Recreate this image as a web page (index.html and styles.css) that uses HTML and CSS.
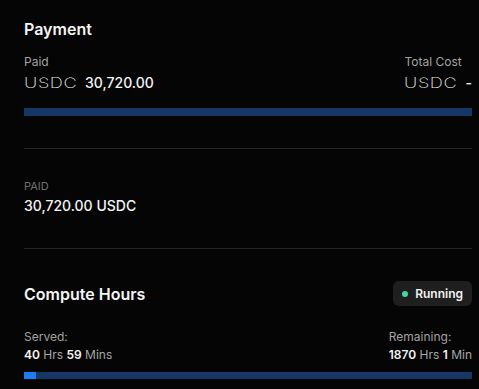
FILE: index.html
```html
<!DOCTYPE html>
<html lang="en">
<head>
    <meta charset="UTF-8">
    <meta name="viewport" content="width=device-width, initial-scale=1.0">
    <title>Payment</title>
    <link rel="stylesheet" href="styles.css">
</head>
<body>
  <div class="panel">
    <div class="section">
      <h2>Payment</h2>
      <div class="split">
        <div class="stat">
          <p class="label">Paid</p>
          <div class="amount"><span class="coin">USDC</span><span class="num">30,720.00</span></div>
        </div>
        <div class="stat">
          <p class="label">Total Cost</p>
          <div class="amount"><span class="coin">USDC</span><span class="num">-</span></div>
        </div>
      </div>
      <div class="bar"><div class="fill" style="width: 0%"></div></div>
    </div>

    <div class="line"></div>

    <div class="section paid">
      <p class="caps">PAID</p>
      <p class="total">30,720.00 USDC</p>
    </div>

    <div class="line"></div>

    <div class="section">
      <div class="head">
        <h2>Compute Hours</h2>
        <div class="badge"><span class="dot"></span>Running</div>
      </div>
      <div class="split hours">
        <div class="stat">
          <p class="label">Served:</p>
          <p class="time"><b>40</b> Hrs <b>59</b> Mins</p>
        </div>
        <div class="stat">
          <p class="label">Remaining:</p>
          <p class="time"><b>1870</b> Hrs <b>1</b> Min</p>
        </div>
      </div>
      <div class="bar thin"><div class="fill" style="width: 2.7%"></div></div>
    </div>
  </div>
</body>
</html>
```

FILE: styles.css
```css
*{
    margin: 0;
    padding: 0;
    box-sizing: border-box;
    font-family: Inter, "Noto Sans", sans-serif;
}
body{
    background-color: #050505;
    color: #f2f2f2;
}
.panel{
    padding: 19px 7px 0 24px;
}
h2{
    font-size: 16px;
    line-height: 20px;
    font-weight: 600;
    color: #f4f4f4;
}
.split{
    display: flex;
    justify-content: space-between;
    margin-top: 15px;
}
.label{
    font-size: 12px;
    line-height: 16px;
    color: #a3a3a3;
}
.amount{
    display: flex;
    align-items: center;
    margin-top: 2px;
    height: 20px;
}
.coin{
    display: inline-block;
    font-size: 14px;
    font-weight: 200;
    letter-spacing: 0.5px;
    color: #e8e8e8;
    transform: scaleX(1.3);
    transform-origin: left center;
    margin-right: 20px;
}
.num{
    font-size: 14px;
    font-weight: 500;
    color: #f4f4f4;
}
.bar{
    height: 8px;
    margin-top: 16px;
    background-color: #163765;
}
.bar.thin{
    height: 7px;
    margin-top: 9px;
}
.fill{
    height: 100%;
    background-color: #1b7cf3;
}
.line{
    height: 1px;
    margin-top: 32px;
    background-color: #262626;
}
.paid{
    padding-top: 30px;
}
.caps{
    font-size: 11px;
    line-height: 14px;
    color: #707070;
}
.total{
    margin-top: 3px;
    font-size: 14px;
    line-height: 20px;
    font-weight: 500;
    color: #f4f4f4;
}
.head{
    display: flex;
    justify-content: space-between;
    align-items: center;
    margin-top: 32px;
}
.badge{
    display: flex;
    align-items: center;
    gap: 7px;
    height: 25px;
    padding: 0 9px;
    border-radius: 6px;
    background-color: #1f1f1f;
    font-size: 12px;
    font-weight: 600;
    color: #f2f2f2;
}
.dot{
    width: 6px;
    height: 6px;
    border-radius: 50%;
    background-color: #3fd8a6;
}
.hours{
    margin-top: 23px;
}
.time{
    margin-top: 2px;
    font-size: 12px;
    line-height: 16px;
    color: #a6a6a6;
}
.time b{
    font-weight: 600;
    color: #f4f4f4;
}
```
